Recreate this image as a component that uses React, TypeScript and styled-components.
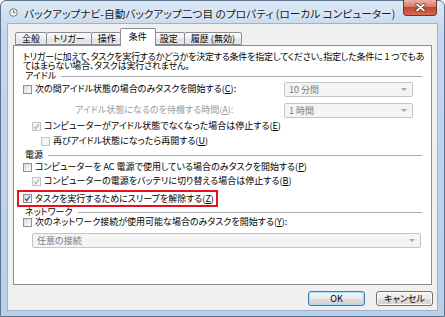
import React from 'react';
import styled, { createGlobalStyle } from 'styled-components';

const GlobalStyle = createGlobalStyle`
  html, body {
    margin: 0;
    padding: 0;
    background: #ffffff;
  }
  body {
    overflow: hidden;
  }
`;

const Window = styled.div`
  width: 445px;
  height: 317px;
  box-sizing: border-box;
  display: flex;
  flex-direction: column;
  border: 1px solid #5d728c;
  border-radius: 6px 6px 0 0;
  background: linear-gradient(180deg, #dce8f5 0%, #c3d7ee 10%, #b8d0ea 100%);
  padding: 0 6px 5px 6px;
  font-family: 'Noto Sans CJK JP', 'Noto Sans', sans-serif;
  font-feature-settings: 'palt' 1;
  font-size: 9px;
  color: #000;
`;

const TitleBar = styled.div`
  height: 22px;
  display: flex;
  align-items: center;
  padding-left: 2px;
`;

const TitleText = styled.div`
  margin-left: 6px;
  margin-top: 2px;
  font-size: 10.7px;
  white-space: nowrap;
  color: #1a1a1a;
  text-shadow: 0 0 4px rgba(255, 255, 255, 0.9);
`;

const CloseButton = styled.div`
  align-self: flex-start;
  margin-left: auto;
  margin-right: 1px;
  margin-top: -1px;
  width: 34px;
  height: 16px;
  box-sizing: border-box;
  border: 1px solid #7a3328;
  border-top: none;
  border-radius: 0 0 4px 4px;
  background: linear-gradient(180deg, #eab1a6 0%, #d87a66 45%, #c4452c 50%, #d66a52 100%);
  display: flex;
  align-items: center;
  justify-content: center;
`;

const Client = styled.div`
  flex: 1;
  display: flex;
  flex-direction: column;
  background: #f0f0f0;
  border: 1px solid #9fb2c9;
  padding: 4px 5px 0 5px;
`;

const TabStrip = styled.div`
  height: 17px;
  display: flex;
  align-items: flex-end;
  padding-left: 3px;
`;

const Tab = styled.div<{ $active?: boolean }>`
  position: relative;
  z-index: ${(p) => (p.$active ? 2 : 1)};
  height: ${(p) => (p.$active ? '18px' : '13px')};
  margin: ${(p) => (p.$active ? '0 -2px -1px -3px' : '0 0 0 -1px')};
  padding: ${(p) => (p.$active ? '0 8px 2px' : '0 6px')};
  box-sizing: border-box;
  border: 1px solid #898c95;
  border-bottom: ${(p) => (p.$active ? 'none' : '1px solid #898c95')};
  border-radius: 2px 2px 0 0;
  background: ${(p) =>
    p.$active
      ? '#ffffff'
      : 'linear-gradient(180deg, #fbfbfb 0%, #eeeeee 50%, #e2e2e2 51%, #e8e8e8 100%)'};
  display: flex;
  align-items: center;
  white-space: nowrap;
`;

const Panel = styled.div`
  height: 240px;
  box-sizing: border-box;
  border: 1px solid #898c95;
  background: #ffffff;
  padding: 6px 9px 0 9px;
  display: flex;
  flex-direction: column;
`;

const Intro = styled.div`
  line-height: 9px;
  letter-spacing: -0.2px;
  white-space: nowrap;
`;

const GroupHeader = styled.div<{ $mt: number }>`
  display: flex;
  align-items: center;
  height: 9px;
  margin-top: ${(p) => p.$mt}px;
  padding-left: 2px;
  white-space: nowrap;
  &::after {
    content: '';
    flex: 1;
    height: 1px;
    margin-left: 5px;
    margin-top: 1px;
    background: #a9abaf;
  }
`;

const Row = styled.div<{ $mt: number; $h: number; $indent?: number }>`
  display: flex;
  align-items: center;
  height: ${(p) => p.$h}px;
  margin-top: ${(p) => p.$mt}px;
  padding-left: ${(p) => p.$indent || 0}px;
  white-space: nowrap;
`;

const Highlight = styled.div<{ $mt: number }>`
  align-self: flex-start;
  display: flex;
  align-items: center;
  height: 17px;
  box-sizing: border-box;
  margin-top: ${(p) => p.$mt}px;
  margin-left: -6px;
  padding: 0 2px 0 4px;
  border: 2px solid #e8101c;
  white-space: nowrap;
`;

const Box = styled.span<{ $disabled?: boolean }>`
  width: 9px;
  height: 9px;
  box-sizing: border-box;
  flex-shrink: 0;
  border: 1px solid ${(p) => (p.$disabled ? '#c2c2c2' : '#8e8f8f')};
  background: ${(p) =>
    p.$disabled ? '#f4f4f4' : 'linear-gradient(135deg, #d6d6d6 0%, #f4f4f4 70%, #ffffff 100%)'};
  display: flex;
  align-items: center;
  justify-content: center;
`;

const Label = styled.span<{ $muted?: boolean; $gap?: number }>`
  margin-left: ${(p) => (p.$gap === undefined ? 3 : p.$gap)}px;
  color: ${(p) => (p.$muted ? '#9a9a9a' : '#000')};
  line-height: 10px;
`;

const Combo = styled.div<{ $ml?: string; $mr?: number; $w?: number }>`
  ${(p) => (p.$w ? `width: ${p.$w}px;` : 'flex: 1;')}
  height: 15px;
  box-sizing: border-box;
  margin-left: ${(p) => p.$ml || 'auto'};
  margin-right: ${(p) => p.$mr || 0}px;
  border: 1px solid #c3c5c8;
  border-radius: 2px;
  background: #f4f4f4;
  color: #7d7d7d;
  display: flex;
  align-items: center;
  padding: 0 5px 0 4px;
  white-space: nowrap;
  &::after {
    content: '';
    margin-left: auto;
    border-left: 3px solid transparent;
    border-right: 3px solid transparent;
    border-top: 3px solid #a8a8a8;
  }
`;

const ButtonRow = styled.div`
  display: flex;
  justify-content: flex-end;
  gap: 11px;
  margin-top: 6px;
  margin-right: -1px;
`;

const DialogButton = styled.div<{ $default?: boolean }>`
  width: 57px;
  height: 15px;
  box-sizing: border-box;
  border: 1px solid ${(p) => (p.$default ? '#3c7fb1' : '#707070')};
  border-radius: 3px;
  background: linear-gradient(180deg, #f4f4f4 0%, #ebebeb 50%, #dddddd 51%, #d2d2d2 100%);
  box-shadow: ${(p) => (p.$default ? 'inset 0 0 0 1px #a8dcf6' : 'inset 0 0 0 1px #fbfbfb')};
  display: flex;
  align-items: center;
  justify-content: center;
  white-space: nowrap;
`;

const Check = ({ checked, disabled }: { checked?: boolean; disabled?: boolean }) => (
  <Box $disabled={disabled}>
    {checked && (
      <svg width="7" height="7" viewBox="0 0 7 7">
        <path
          d="M1 3.6 L2.8 5.6 L6 1"
          fill="none"
          stroke={disabled ? '#b4b4b4' : '#3b4f8e'}
          strokeWidth="1.3"
        />
      </svg>
    )}
  </Box>
);

const ClockIcon = () => (
  <svg width="9" height="9" viewBox="0 0 9 9">
    <circle cx="4.5" cy="4.5" r="3.8" fill="#f4f4f0" stroke="#6f6f6f" strokeWidth="0.9" />
    <path d="M4.5 2 V4.6 H6.3" fill="none" stroke="#555" strokeWidth="0.8" />
  </svg>
);

const CloseGlyph = () => (
  <svg width="11" height="9" viewBox="0 0 11 9">
    <path d="M2 1.5 L9 7.5 M9 1.5 L2 7.5" stroke="#5a2a22" strokeWidth="3.2" strokeLinecap="round" />
    <path d="M2 1.5 L9 7.5 M9 1.5 L2 7.5" stroke="#ffffff" strokeWidth="1.8" strokeLinecap="round" />
  </svg>
);

const tabs = ['全般', 'トリガー', '操作', '条件', '設定', '履歴 (無効)'];

export default function App() {
  return (
    <>
      <GlobalStyle />
      <Window>
        <TitleBar>
          <ClockIcon />
          <TitleText>バックアップナビ-自動バックアップ二つ目 のプロパティ (ローカル コンピューター)</TitleText>
          <CloseButton>
            <CloseGlyph />
          </CloseButton>
        </TitleBar>
        <Client>
          <TabStrip>
            {tabs.map((t) => (
              <Tab key={t} $active={t === '条件'}>
                {t}
              </Tab>
            ))}
          </TabStrip>
          <Panel>
            <Intro>
              トリガーに加えて、タスクを実行するかどうかを決定する条件を指定してください。指定した条件に 1 つでもあ
              <br />
              てはまらない場合、タスクは実行されません。
            </Intro>

            <GroupHeader $mt={1}>アイドル</GroupHeader>
            <Row $mt={1} $h={16}>
              <Check />
              <Label>
                次の間アイドル状態の場合のみタスクを開始する(<u>C</u>):
              </Label>
              <Combo $w={129} $mr={9}>10 分間</Combo>
            </Row>
            <Row $mt={5} $h={16}>
              <Label $muted $gap={52}>
                アイドル状態になるのを待機する時間(<u>A</u>):
              </Label>
              <Combo $w={129} $mr={9}>1 時間</Combo>
            </Row>
            <Row $mt={3} $h={10} $indent={9}>
              <Check checked disabled />
              <Label>
                コンピューターがアイドル状態でなくなった場合は停止する(<u>E</u>)
              </Label>
            </Row>
            <Row $mt={5} $h={10} $indent={18}>
              <Check disabled />
              <Label>
                再びアイドル状態になったら再開する(<u>U</u>)
              </Label>
            </Row>

            <GroupHeader $mt={4}>電源</GroupHeader>
            <Row $mt={3} $h={10}>
              <Check />
              <Label>
                コンピューターを AC 電源で使用している場合のみタスクを開始する(<u>P</u>)
              </Label>
            </Row>
            <Row $mt={4} $h={10} $indent={9}>
              <Check checked disabled />
              <Label>
                コンピューターの電源をバッテリに切り替える場合は停止する(<u>B</u>)
              </Label>
            </Row>
            <Highlight $mt={4}>
              <Check checked />
              <Label>
                タスクを実行するためにスリープを解除する(<u>Z</u>)
              </Label>
            </Highlight>

            <GroupHeader $mt={0}>ネットワーク</GroupHeader>
            <Row $mt={1} $h={10}>
              <Check />
              <Label>
                次のネットワーク接続が使用可能な場合のみタスクを開始する(<u>Y</u>):
              </Label>
            </Row>
            <Row $mt={6} $h={15}>
              <Combo $ml="9px" $mr={1}>任意の接続</Combo>
            </Row>
          </Panel>
          <ButtonRow>
            <DialogButton $default>OK</DialogButton>
            <DialogButton>キャンセル</DialogButton>
          </ButtonRow>
        </Client>
      </Window>
    </>
  );
}
